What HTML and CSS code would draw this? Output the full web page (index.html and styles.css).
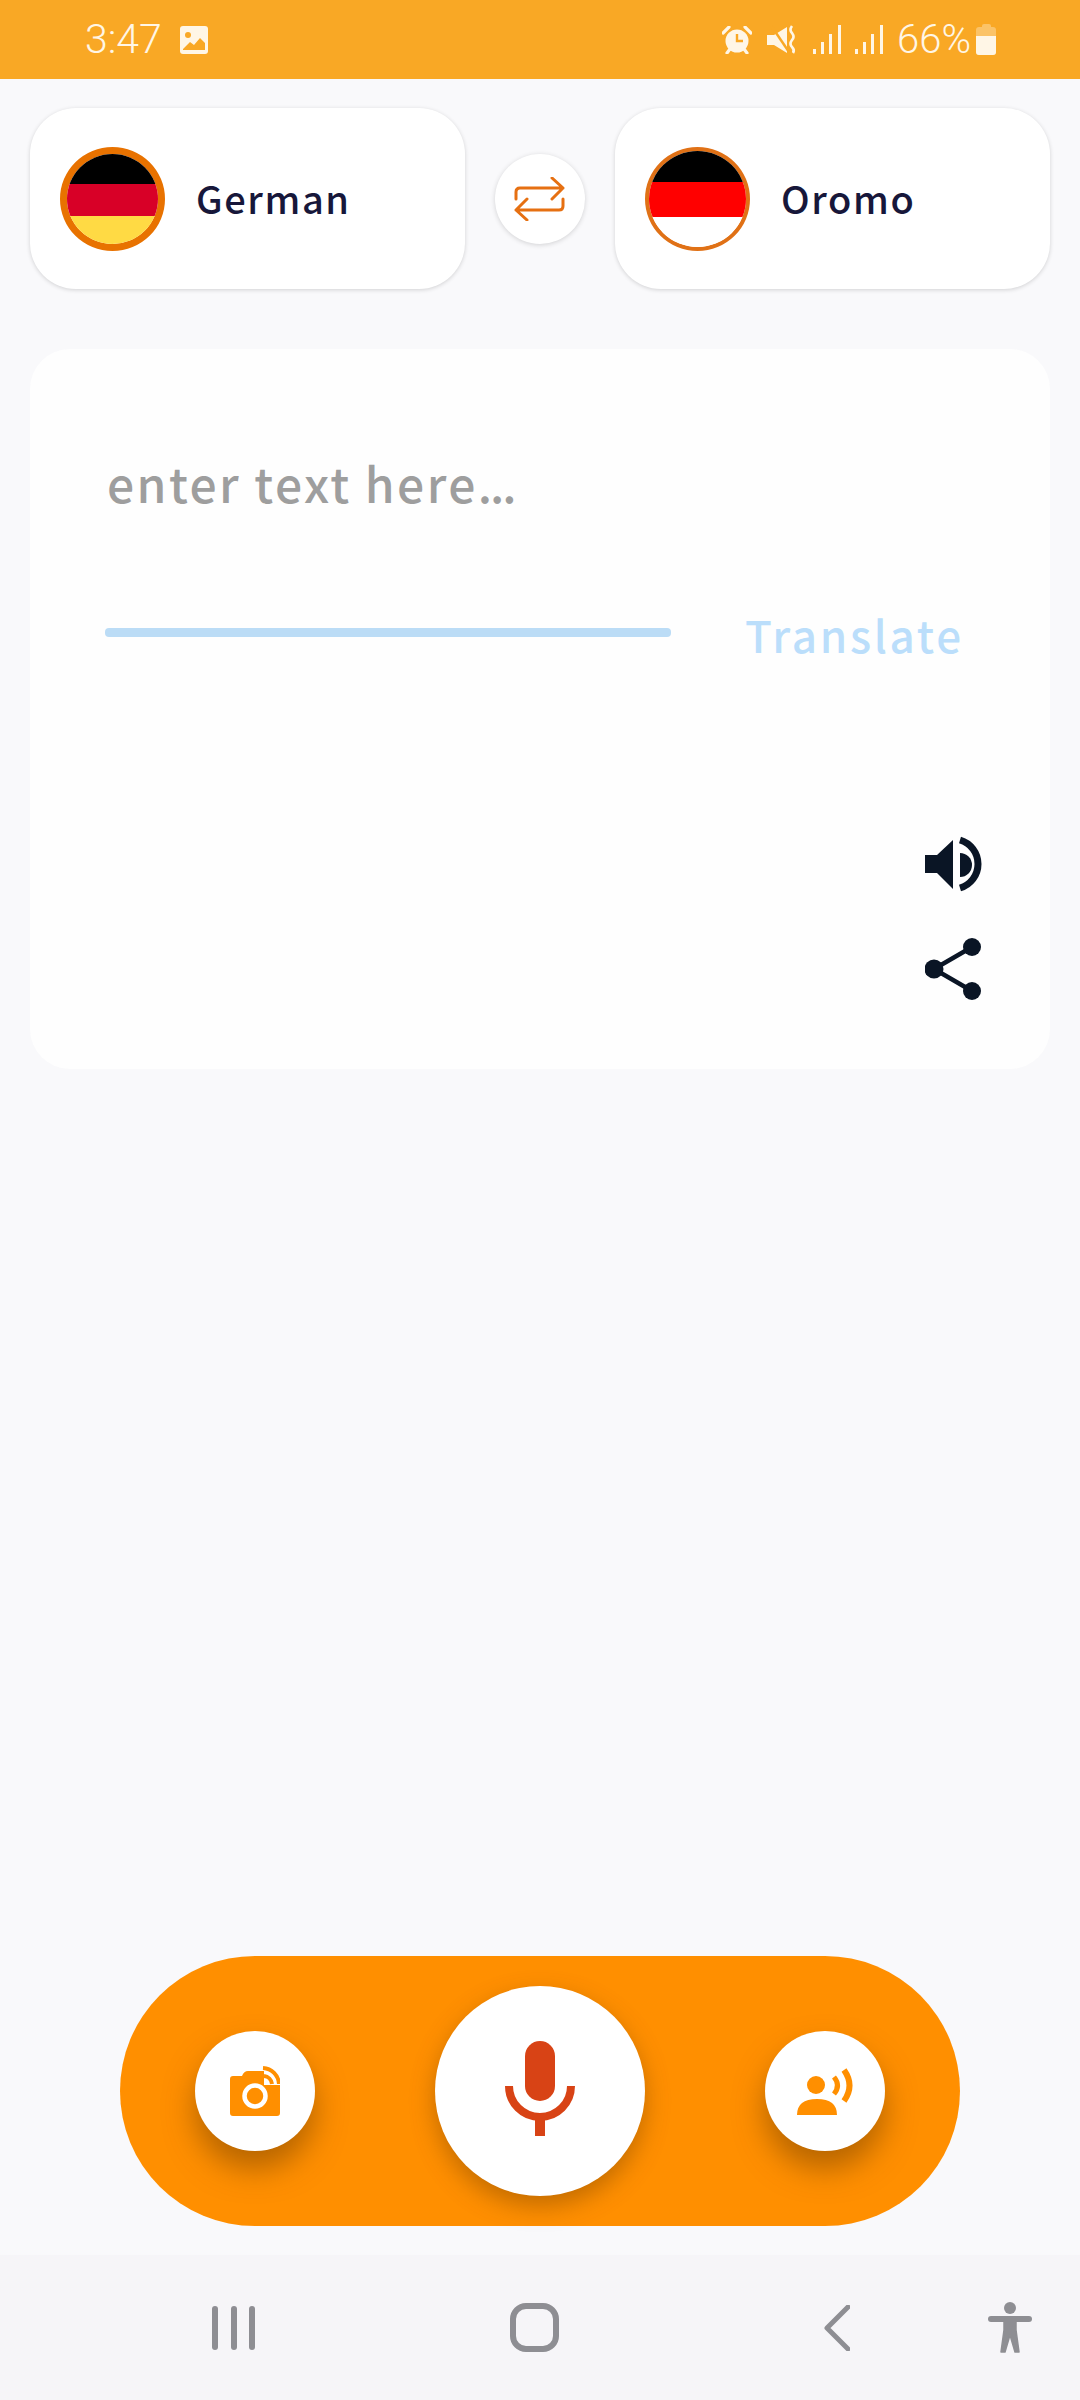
FILE: index.html
```html
<!DOCTYPE html>
<html lang="en">
<head>
  <meta charset="UTF-8">
  <title>Translate</title>
  <link rel="stylesheet" href="styles.css">
</head>
<body>
  <div class="status-bar">
    <span class="time">3:47</span>
    <svg class="st-image" width="28" height="28" viewBox="0 0 28 28">
      <rect width="28" height="28" rx="3" fill="#fff6e6"/>
      <circle cx="8" cy="9" r="3" fill="#f9a825"/>
      <path d="M3 23 L10 16 L14 19 L20 12 L25 17 V24 H3 Z" fill="#f9a825"/>
    </svg>
    <div class="status-right">
      <svg class="st-alarm" width="30" height="28" viewBox="0 0 30 28">
        <circle cx="15" cy="15" r="11.5" fill="#fff6e6"/>
        <path d="M15 8 V15 H21" fill="none" stroke="#f9a825" stroke-width="2.4"/>
        <path d="M1 7 L7 1 M29 7 L23 1 M5 27 L8 23 M25 27 L22 23" stroke="#fff6e6" stroke-width="3.2" stroke-linecap="round"/>
      </svg>
      <svg class="st-mute" width="30" height="29" viewBox="0 0 30 29">
        <path d="M0 10 H7 L20 2 V28 L7 20 H0 Z" fill="#fff6e6"/>
        <path d="M3 -1 L22 27" stroke="#f9a825" stroke-width="2.5"/>
        <path d="M25 1 Q22 5 25 8 Q28 12 25 15 Q22 19 25 22 Q28 25 26 28" fill="none" stroke="#fff6e6" stroke-width="2.6"/>
      </svg>
      <svg class="st-signal" width="28" height="29" viewBox="0 0 28 29">
        <path d="M0 24 h3 v5 h-3 z M8 17 h3 v12 h-3 z M16 9 h3 v20 h-3 z M25 0 h3 v29 h-3 z" fill="#fff6e6"/>
      </svg>
      <svg class="st-signal" width="28" height="29" viewBox="0 0 28 29">
        <path d="M0 24 h3 v5 h-3 z M8 17 h3 v12 h-3 z M16 9 h3 v20 h-3 z M25 0 h3 v29 h-3 z" fill="#fff6e6"/>
      </svg>
      <span class="battery-pct">66%</span>
      <div class="battery">
        <div class="battery-nub"></div>
        <div class="battery-body"><div class="battery-fill"></div></div>
      </div>
    </div>
  </div>

  <div class="lang-row">
    <div class="lang-card">
      <div class="flag flag-de">
        <div class="stripe s-black"></div>
        <div class="stripe s-red"></div>
        <div class="stripe s-yellow"></div>
      </div>
      <span class="lang-name">German</span>
    </div>
    <div class="swap-btn">
      <svg width="52" height="44" viewBox="0 0 52 44">
        <path d="M2 22 V15 Q2 11 6 11 H49 M38 1 L49 11 L38 22" fill="none" stroke="#e67012" stroke-width="3" stroke-linecap="round" stroke-linejoin="round"/>
        <path d="M49 22 V29 Q49 33 45 33 H2 M13 22 L2 33 L13 43" fill="none" stroke="#e67012" stroke-width="3" stroke-linecap="round" stroke-linejoin="round"/>
      </svg>
    </div>
    <div class="lang-card">
      <div class="flag flag-om">
        <div class="stripe s-black"></div>
        <div class="stripe s-red"></div>
        <div class="stripe s-white"></div>
      </div>
      <span class="lang-name">Oromo</span>
    </div>
  </div>

  <div class="main-card">
    <div class="placeholder">enter text here<span class="dots">...</span></div>
    <div class="input-row">
      <div class="input-line"></div>
      <span class="translate-btn">Translate</span>
    </div>
    <div class="card-actions">
      <svg width="57" height="56" viewBox="0 0 57 56">
        <path d="M0 19 H12 L28 4 V53 L12 37 H0 Z" fill="#0a1525"/>
        <path d="M35 17 A12 12 0 0 1 35 41 Z" fill="#0a1525"/>
        <path d="M35 4 A25 25 0 0 1 35 52" fill="none" stroke="#0a1525" stroke-width="7"/>
      </svg>
      <svg width="57" height="63" viewBox="0 0 57 63">
        <path d="M47 9 L9 31 L47 53" fill="none" stroke="#0a1525" stroke-width="4.5"/>
        <circle cx="47" cy="9" r="9" fill="#0a1525"/>
        <circle cx="9" cy="31" r="9.5" fill="#0a1525"/>
        <circle cx="47" cy="53" r="9" fill="#0a1525"/>
      </svg>
    </div>
  </div>

  <div class="action-pill">
    <div class="round-btn">
      <svg width="50" height="51" viewBox="0 0 50 51">
        <path d="M3 10 H12 Q14 5 18 5 H34 V19 H50 V47 Q50 50 47 50 H3 Q0 50 0 47 V13 Q0 10 3 10 Z" fill="#ff8f00"/>
        <circle cx="25" cy="30" r="10.5" fill="none" stroke="#fff" stroke-width="4.5"/>
        <path d="M33 2 A17 17 0 0 1 49 18" fill="none" stroke="#ff8f00" stroke-width="4"/>
        <path d="M34 10 A9 9 0 0 1 42 18" fill="none" stroke="#ff8f00" stroke-width="4"/>
      </svg>
    </div>
    <div class="round-btn round-btn-big">
      <svg class="mic" width="70" height="95" viewBox="0 0 70 95">
        <rect x="20" y="0" width="30" height="60" rx="15" fill="#d84315"/>
        <path d="M4 45 A31 31 0 0 0 66 45" fill="none" stroke="#d84315" stroke-width="8"/>
        <rect x="30" y="76" width="10" height="19" fill="#d84315"/>
      </svg>
    </div>
    <div class="round-btn">
      <svg width="56" height="47" viewBox="0 0 56 47">
        <circle cx="19" cy="17" r="9" fill="#ff8f00"/>
        <path d="M0 47 Q0 31 20 31 Q40 31 40 47 Z" fill="#ff8f00"/>
        <path d="M37 9 Q44 17.5 37 26" fill="none" stroke="#ff8f00" stroke-width="5"/>
        <path d="M47 2 Q58 17.5 47 33" fill="none" stroke="#ff8f00" stroke-width="6"/>
      </svg>
    </div>
  </div>

  <div class="nav-bar">
    <div class="nav-recents"><span></span><span></span><span></span></div>
    <div class="nav-home"></div>
    <svg class="nav-back" width="26" height="46" viewBox="0 0 26 46">
      <path d="M24 2 L3 23 L24 44" fill="none" stroke="#8e8e93" stroke-width="5" stroke-linecap="round" stroke-linejoin="round"/>
    </svg>
    <svg class="nav-a11y" width="44" height="52" viewBox="0 0 44 52">
      <circle cx="22" cy="6" r="6" fill="#8e8e93"/>
      <path d="M3 17 H41" stroke="#8e8e93" stroke-width="6" stroke-linecap="round"/>
      <path d="M16 17 H28 V28 L31 50 H27 L22 33 L17 50 H13 L16 28 Z" fill="#8e8e93" stroke="#8e8e93" stroke-width="1.5" stroke-linejoin="round"/>
    </svg>
  </div>
</body>
</html>
```

FILE: styles.css
```css
* {
  box-sizing: border-box;
}

body {
  margin: 0;
  width: 1080px;
  height: 2400px;
  background-color: #f9f9fb;
  font-family: "Noto Sans CJK JP", "Noto Sans", sans-serif;
  display: flex;
  flex-direction: column;
  overflow: hidden;
}

/* status bar */
.status-bar {
  height: 79px;
  background-color: #f9a825;
  color: #fff6e6;
  display: flex;
  align-items: center;
  padding-left: 85px;
  flex-shrink: 0;
}

.time {
  font-family: Roboto, sans-serif;
  font-weight: 300;
  font-size: 41px;
  line-height: 79px;
}

.st-image {
  margin-left: 18px;
}

.status-right {
  margin-left: auto;
  display: flex;
  align-items: center;
  margin-right: 84px;
}

.st-alarm {
  margin-right: 15px;
}

.st-mute {
  margin-right: 16px;
}

.st-signal {
  margin-right: 14px;
}

.battery-pct {
  font-family: Roboto, sans-serif;
  font-weight: 300;
  font-size: 40px;
  line-height: 79px;
}

.battery {
  width: 20px;
  height: 31px;
  margin-left: 5px;
  display: flex;
  flex-direction: column;
  align-items: center;
}

.battery-nub {
  width: 9px;
  height: 3px;
  border-radius: 2px 2px 0 0;
  background-color: rgba(255, 246, 230, 0.35);
}

.battery-body {
  width: 20px;
  height: 28px;
  border-radius: 3px;
  background-color: rgba(255, 246, 230, 0.35);
  display: flex;
  align-items: flex-end;
  overflow: hidden;
}

.battery-fill {
  width: 100%;
  height: 19px;
  background-color: #fff6e6;
}

/* language pickers */
.lang-row {
  display: flex;
  justify-content: space-between;
  align-items: center;
  padding: 0 30px;
  margin-top: 29px;
}

.lang-card {
  width: 435px;
  height: 181px;
  background-color: #fff;
  border-radius: 46px;
  box-shadow: 0 1px 4px rgba(0, 0, 0, 0.16);
  display: flex;
  align-items: center;
  padding-left: 30px;
}

.flag {
  width: 105px;
  height: 104px;
  border-radius: 50%;
  overflow: hidden;
  display: flex;
  flex-direction: column;
  border: 7px solid #e87200;
  flex-shrink: 0;
}

.flag-om {
  border-width: 4px;
  border-color: #e07116;
}

.stripe {
  flex-shrink: 0;
}

.s-black {
  background-color: #000;
  height: 30px;
}

.s-red {
  background-color: #d80027;
  height: 32px;
}

.s-yellow {
  background-color: #ffda44;
  height: 28px;
}

.flag-om .s-black {
  height: 31px;
}

.flag-om .s-red {
  background-color: #f00;
  height: 35px;
}

.s-white {
  background-color: #fff;
  height: 30px;
}

.lang-name {
  margin: 0 0 3px 31px;
  font-size: 38px;
  font-weight: 500;
  letter-spacing: 1.6px;
  color: #17173a;
}

.swap-btn {
  width: 90px;
  height: 90px;
  border-radius: 50%;
  background-color: #fff;
  box-shadow: 0 1px 5px rgba(0, 0, 0, 0.16);
  display: flex;
  align-items: center;
  justify-content: center;
}

/* text card */
.main-card {
  margin: 60px 30px 0;
  height: 720px;
  background-color: #fefefe;
  border-radius: 40px;
  padding: 98px 44px 0 75px;
  display: flex;
  flex-direction: column;
}

.placeholder {
  font-size: 48px;
  font-weight: 500;
  line-height: 70px;
  letter-spacing: 2.4px;
  color: #9e9e9e;
  margin-left: 2px;
}

.dots {
  letter-spacing: -2px;
}

.input-row {
  display: flex;
  align-items: center;
  margin-top: 85px;
}

.input-line {
  width: 566px;
  height: 9px;
  border-radius: 4px;
  background-color: #bbdcf6;
}

.translate-btn {
  margin: 0 0 -4px 74px;
  font-size: 44px;
  font-weight: 500;
  letter-spacing: 2.7px;
  color: #bbdefb;
}

.card-actions {
  margin-top: 174px;
  display: flex;
  flex-direction: column;
  align-items: flex-end;
  gap: 46px;
  padding-right: 24px;
}

/* bottom actions */
.action-pill {
  margin: auto auto 29px;
  width: 840px;
  height: 270px;
  border-radius: 135px;
  background-color: #ff8f00;
  padding: 0 75px;
  display: flex;
  align-items: center;
  justify-content: space-between;
}

.round-btn {
  width: 120px;
  height: 120px;
  border-radius: 50%;
  background-color: #fff;
  box-shadow: 0 18px 30px rgba(110, 60, 0, 0.5);
  display: flex;
  align-items: center;
  justify-content: center;
}

.round-btn-big {
  width: 210px;
  height: 210px;
  box-shadow: 0 10px 24px rgba(110, 60, 0, 0.42);
}

.mic {
  margin-top: -5px;
}

/* system nav */
.nav-bar {
  height: 145px;
  background-color: #f6f5f8;
  display: flex;
  align-items: center;
  padding-left: 212px;
  flex-shrink: 0;
}

.nav-recents {
  width: 43px;
  height: 44px;
  display: flex;
  justify-content: space-between;
}

.nav-recents span {
  width: 6px;
  background-color: #8e8e93;
  border-radius: 3px;
}

.nav-home {
  width: 49px;
  height: 49px;
  margin-left: 255px;
  border: 6px solid #8e8e93;
  border-radius: 16px;
}

.nav-back {
  margin-left: 265px;
}

.nav-a11y {
  margin-left: 138px;
}
```
